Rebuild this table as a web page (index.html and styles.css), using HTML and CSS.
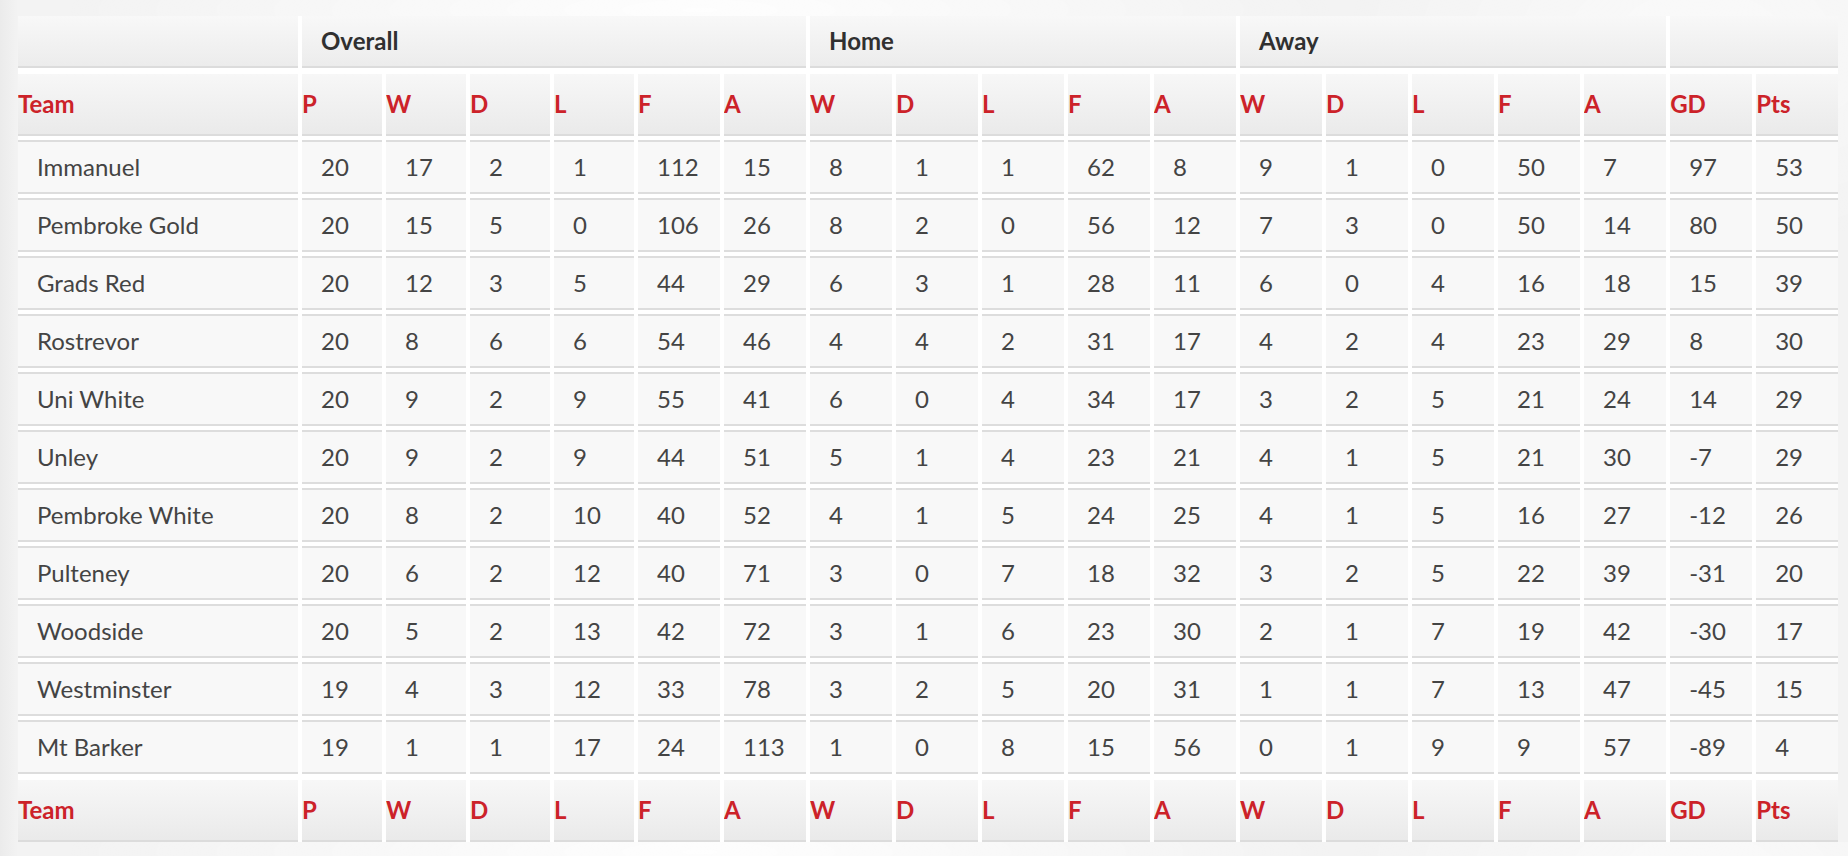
FILE: index.html
```html
<!DOCTYPE html>
<html lang="en">
<head>
<meta charset="utf-8">
<title>Standings</title>
<link rel="stylesheet" href="styles.css">
</head>
<body>
<div class="page">
  <div class="table-wrap">
    <table class="standings">
      <colgroup>
        <col class="c-team">
        <col class="c-n"><col class="c-n"><col class="c-n"><col class="c-n">
        <col class="c-w"><col class="c-w">
        <col class="c-w"><col class="c-w"><col class="c-w"><col class="c-w"><col class="c-w">
        <col class="c-w"><col class="c-w"><col class="c-w"><col class="c-w"><col class="c-w">
        <col class="c-w"><col class="c-w">
      </colgroup>
      <thead>
        <tr class="group-row">
          <th class="group"></th>
          <th class="group" colspan="6">Overall</th>
          <th class="group" colspan="5">Home</th>
          <th class="group" colspan="5">Away</th>
          <th class="group" colspan="2"></th>
        </tr>
        <tr class="label-row">
          <th>Team</th><th>P</th><th>W</th><th>D</th><th>L</th><th>F</th><th>A</th>
          <th>W</th><th>D</th><th>L</th><th>F</th><th>A</th>
          <th>W</th><th>D</th><th>L</th><th>F</th><th>A</th>
          <th>GD</th><th>Pts</th>
        </tr>
      </thead>
      <tbody>
        <tr><td>Immanuel</td><td>20</td><td>17</td><td>2</td><td>1</td><td>112</td><td>15</td><td>8</td><td>1</td><td>1</td><td>62</td><td>8</td><td>9</td><td>1</td><td>0</td><td>50</td><td>7</td><td>97</td><td>53</td></tr>
        <tr><td>Pembroke Gold</td><td>20</td><td>15</td><td>5</td><td>0</td><td>106</td><td>26</td><td>8</td><td>2</td><td>0</td><td>56</td><td>12</td><td>7</td><td>3</td><td>0</td><td>50</td><td>14</td><td>80</td><td>50</td></tr>
        <tr><td>Grads Red</td><td>20</td><td>12</td><td>3</td><td>5</td><td>44</td><td>29</td><td>6</td><td>3</td><td>1</td><td>28</td><td>11</td><td>6</td><td>0</td><td>4</td><td>16</td><td>18</td><td>15</td><td>39</td></tr>
        <tr><td>Rostrevor</td><td>20</td><td>8</td><td>6</td><td>6</td><td>54</td><td>46</td><td>4</td><td>4</td><td>2</td><td>31</td><td>17</td><td>4</td><td>2</td><td>4</td><td>23</td><td>29</td><td>8</td><td>30</td></tr>
        <tr><td>Uni White</td><td>20</td><td>9</td><td>2</td><td>9</td><td>55</td><td>41</td><td>6</td><td>0</td><td>4</td><td>34</td><td>17</td><td>3</td><td>2</td><td>5</td><td>21</td><td>24</td><td>14</td><td>29</td></tr>
        <tr><td>Unley</td><td>20</td><td>9</td><td>2</td><td>9</td><td>44</td><td>51</td><td>5</td><td>1</td><td>4</td><td>23</td><td>21</td><td>4</td><td>1</td><td>5</td><td>21</td><td>30</td><td>-7</td><td>29</td></tr>
        <tr><td>Pembroke White</td><td>20</td><td>8</td><td>2</td><td>10</td><td>40</td><td>52</td><td>4</td><td>1</td><td>5</td><td>24</td><td>25</td><td>4</td><td>1</td><td>5</td><td>16</td><td>27</td><td>-12</td><td>26</td></tr>
        <tr><td>Pulteney</td><td>20</td><td>6</td><td>2</td><td>12</td><td>40</td><td>71</td><td>3</td><td>0</td><td>7</td><td>18</td><td>32</td><td>3</td><td>2</td><td>5</td><td>22</td><td>39</td><td>-31</td><td>20</td></tr>
        <tr><td>Woodside</td><td>20</td><td>5</td><td>2</td><td>13</td><td>42</td><td>72</td><td>3</td><td>1</td><td>6</td><td>23</td><td>30</td><td>2</td><td>1</td><td>7</td><td>19</td><td>42</td><td>-30</td><td>17</td></tr>
        <tr><td>Westminster</td><td>19</td><td>4</td><td>3</td><td>12</td><td>33</td><td>78</td><td>3</td><td>2</td><td>5</td><td>20</td><td>31</td><td>1</td><td>1</td><td>7</td><td>13</td><td>47</td><td>-45</td><td>15</td></tr>
        <tr><td>Mt Barker</td><td>19</td><td>1</td><td>1</td><td>17</td><td>24</td><td>113</td><td>1</td><td>0</td><td>8</td><td>15</td><td>56</td><td>0</td><td>1</td><td>9</td><td>9</td><td>57</td><td>-89</td><td>4</td></tr>
      </tbody>
      <tfoot>
        <tr class="label-row">
          <th>Team</th><th>P</th><th>W</th><th>D</th><th>L</th><th>F</th><th>A</th>
          <th>W</th><th>D</th><th>L</th><th>F</th><th>A</th>
          <th>W</th><th>D</th><th>L</th><th>F</th><th>A</th>
          <th>GD</th><th>Pts</th>
        </tr>
      </tfoot>
    </table>
  </div>
</div>
</body>
</html>
```

FILE: styles.css
```css
html, body {
  margin: 0;
  padding: 0;
  overflow: hidden;
}

body {
  background-color: #efefef;
  background-image:
    radial-gradient(ellipse 900px 120px at 700px 10px, rgba(255,255,255,0.9), rgba(255,255,255,0) 70%),
    radial-gradient(ellipse 500px 300px at 1700px 40px, rgba(255,255,255,0.6), rgba(255,255,255,0) 70%),
    linear-gradient(90deg, #ebebeb 0px, #f3f3f3 18px, #f3f3f3 100%);
  font-family: Lato, "Open Sans", "Liberation Sans", sans-serif;
  color: #444;
}

.page {
  padding: 16px 0 0 18px;
}

.table-wrap {
  width: max-content;
  overflow: hidden;
  background: #fff;
}

.standings {
  margin: -4px;
  border-collapse: separate;
  border-spacing: 4px;
  table-layout: fixed;
  width: 1828px;
  background: #fff;
  font-size: 24px;
}

.c-team { width: 280px; }
.c-n { width: 80px; }
.c-w { width: 82px; }

.standings th,
.standings td {
  padding: 0;
  text-align: left;
  white-space: nowrap;
  overflow: hidden;
}

.group-row th {
  height: 50px;
  line-height: 50px;
  padding: 0 0 0 19px;
  border-bottom: 2px solid #dcdcdc;
  background: linear-gradient(#f8f8f8, #ececec);
  color: #303030;
  font-weight: 700;
}

.label-row th {
  height: 60px;
  line-height: 60px;
  border-top: 2px solid #fff;
  border-bottom: 2px solid #dcdcdc;
  background: linear-gradient(#f7f7f7, #eaeaea);
  color: #cc2229;
  font-weight: 700;
}

.standings tbody td {
  height: 50px;
  line-height: 50px;
  padding-left: 19px;
  border-top: 2px solid #dddddd;
  border-bottom: 2px solid #dddddd;
  background: #f8f8f8;
  color: #444;
}
```
